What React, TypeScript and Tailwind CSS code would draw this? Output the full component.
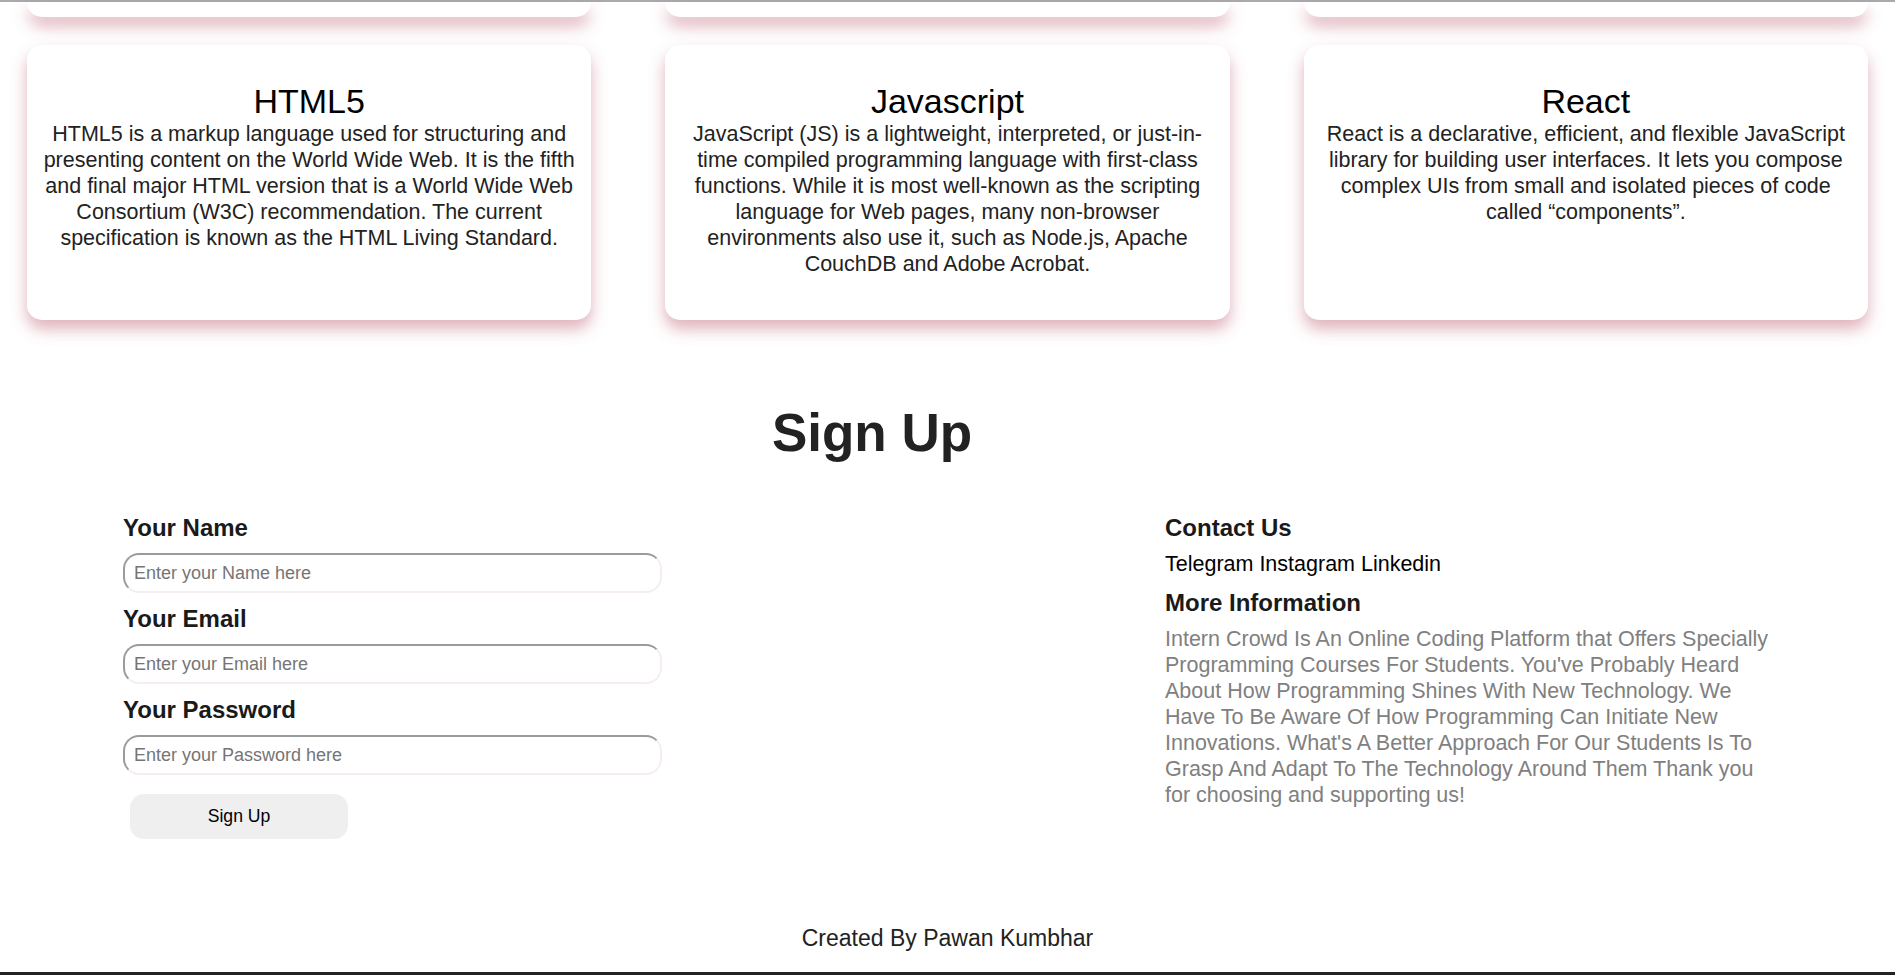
import React from "react";

const cards = [
  {
    title: "HTML5",
    body: "HTML5 is a markup language used for structuring and presenting content on the World Wide Web. It is the fifth and final major HTML version that is a World Wide Web Consortium (W3C) recommendation. The current specification is known as the HTML Living Standard.",
  },
  {
    title: "Javascript",
    body: "JavaScript (JS) is a lightweight, interpreted, or just-in-time compiled programming language with first-class functions. While it is most well-known as the scripting language for Web pages, many non-browser environments also use it, such as Node.js, Apache CouchDB and Adobe Acrobat.",
  },
  {
    title: "React",
    body: "React is a declarative, efficient, and flexible JavaScript library for building user interfaces. It lets you compose complex UIs from small and isolated pieces of code called \u201ccomponents\u201d.",
  },
];

const fields = [
  { label: "Your Name", placeholder: "Enter your Name here", type: "text" },
  { label: "Your Email", placeholder: "Enter your Email here", type: "email" },
  { label: "Your Password", placeholder: "Enter your Password here", type: "password" },
];

const cardShadow = "shadow-[0_9px_16px_rgba(185,85,105,0.45)]";

export default function App() {
  return (
    <div className="min-h-[975px] bg-white text-[#222] font-['Liberation_Sans',Arial,sans-serif] flex flex-col overflow-hidden">
      {/* top edge of the page */}
      <div className="h-[2px] bg-[#a9a9ae]" />

      {/* previous row of cards, scrolled mostly out of view */}
      <div className="grid grid-cols-3 gap-x-[74px] px-[27px]">
        {[0, 1, 2].map((i) => (
          <div key={i} className={`h-[15px] bg-white rounded-b-[15px] ${cardShadow}`} />
        ))}
      </div>

      {/* course cards */}
      <div className="grid grid-cols-3 gap-x-[74px] px-[27px] mt-[28px]">
        {cards.map((c) => (
          <div
            key={c.title}
            className={`h-[275px] bg-white rounded-[15px] px-[10px] pt-[37px] text-center ${cardShadow}`}
          >
            <h2 className="text-[34px] leading-[39px] text-black">{c.title}</h2>
            <p className="text-[21.5px] leading-[26px] text-[#222]">{c.body}</p>
          </div>
        ))}
      </div>

      {/* sign up */}
      <h1 className="mt-[83px] pr-[151px] text-center text-[53px] leading-[60px] font-bold text-[#222]">
        Sign Up
      </h1>

      <div className="mt-[51px] flex">
        <form className="ml-[123px] w-[539px] flex flex-col" onSubmit={(e) => e.preventDefault()}>
          {fields.map((f, i) => (
            <div key={f.label} className={i === 0 ? "" : "mt-[12px]"}>
              <label className="block text-[24px] leading-[28px] font-bold text-[#1a1a1a]">{f.label}</label>
              <input
                type={f.type}
                placeholder={f.placeholder}
                className="mt-[11px] w-full h-[40px] rounded-[16px] border-2 border-t-[#9b9b9b] border-l-[#9b9b9b] border-b-[#f6eeee] border-r-[#f6eeee] bg-white px-[9px] text-[18px] text-[#333] placeholder:text-[#757575] outline-none"
              />
            </div>
          ))}
          <button
            type="submit"
            className="mt-[19px] ml-[7px] w-[218px] h-[45px] rounded-[14px] bg-[#efefef] text-[17.6px] text-black"
          >
            Sign Up
          </button>
        </form>

        <div className="ml-[503px] w-[612px] flex flex-col">
          <h3 className="text-[24px] leading-[28px] font-bold text-[#1a1a1a]">Contact Us</h3>
          <p className="mt-[9px] text-[21.5px] leading-[26px] text-black">Telegram Instagram Linkedin</p>
          <h3 className="mt-[12px] text-[24px] leading-[28px] font-bold text-[#1a1a1a]">More Information</h3>
          <p className="mt-[9px] text-[21.5px] leading-[26px] text-[#808080]">
            Intern Crowd Is An Online Coding Platform that Offers Specially Programming Courses For Students. You've
            Probably Heard About How Programming Shines With New Technology. We Have To Be Aware Of How Programming Can
            Initiate New Innovations. What's A Better Approach For Our Students Is To Grasp And Adapt To The Technology
            Around Them Thank you for choosing and supporting us!
          </p>
        </div>
      </div>

      {/* footer */}
      <footer className="mt-auto border-b-[3px] border-[#222] pb-[20px] text-center text-[23px] leading-[27px] text-[#222]">
        Created By Pawan Kumbhar
      </footer>
    </div>
  );
}
